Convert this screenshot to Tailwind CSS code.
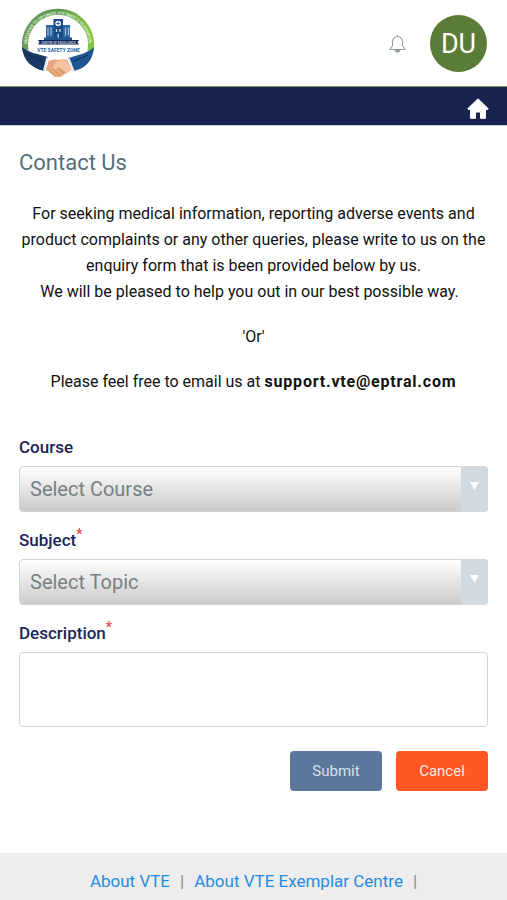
<!DOCTYPE html>
<html lang="en">
<head>
<meta charset="utf-8">
<meta name="viewport" content="width=device-width, initial-scale=1">
<title>Contact Us</title>
<script src="https://cdn.jsdelivr.net/npm/@tailwindcss/browser@4"></script>
</head>
<body class="flex min-h-screen flex-col bg-white font-['Roboto',sans-serif] text-[#111]">
<header>
  <div class="flex h-[86px] items-center justify-between px-5">
    <a href="#" aria-label="VTE Safety Zone home">
      <svg class="block h-[76px] w-[76px]" viewBox="0 0 76 76" font-family="Roboto, sans-serif">
        <defs>
          <linearGradient id="ring" x1="0" x2="1"><stop offset="0" stop-color="#6d9c5c"/><stop offset=".5" stop-color="#5a9a50"/><stop offset="1" stop-color="#84c441"/></linearGradient>
          <path id="arc" d="M7.200 44A31 31 0 1 1 68.800 44"/>
        </defs>
        <circle cx="38" cy="40" r="33" fill="#fff"/>
        <path d="M5.600 46A33 33 0 1 1 70.400 46" fill="none" stroke="url(#ring)" stroke-width="6"/>
        <text font-size="4" font-weight="700" fill="#e5f0df"><textPath href="#arc" startOffset="5">INITIATIVE TO OPTIMIZE VTE SAFETY IN HOSPITAL</textPath></text>
        <path d="M26 20h24v13H26z" fill="#2b65a3"/>
        <path d="M33.500 14h9.500v19h-9.500z" fill="#174c87"/>
        <circle cx="38.200" cy="18.500" r="2.800" fill="#fff"/>
        <path d="M38.200 16.700v3.600M36.400 18.500h3.600" stroke="#2b65a3"/>
        <path d="M28 22.500v8M31 22.500v8M45.500 22.500v8M48.500 22.500v8" stroke="#9fc0e0" stroke-width="1.200"/>
        <path d="M36.500 24v3M40 24v3M38.200 29v4" stroke="#c5dbef" stroke-width="1.300"/>
        <path d="M24 32.500h28V35H24z" fill="#23568f"/>
        <path d="M18 35h41l-1.500 2.300L59 39.500H18l1.500-2.200z" fill="#15265a"/>
        <text x="38.500" y="38.500" text-anchor="middle" font-size="3" font-weight="700" fill="#b9c9de">CENTRE OF EXCELLENCE</text>
        <text x="38.500" y="47" text-anchor="middle" font-size="5" font-weight="700" fill="#23669e">VTE SAFETY ZONE</text>
        <path d="M2 42c7 6 16 7 26 10l-4 14C12 63 3 56 2 42z" fill="#1a3766"/>
        <path d="M74 42c-6 6-15 8-26 11l5 13c12-2 20-10 21-24z" fill="#1f5590"/>
        <path d="m8 50 15 6M68 50l-14 6" fill="none" stroke="#102b52" stroke-width="1"/>
        <path d="m26.500 52 2 1-3.500 13.500-2-1zM49.500 53l-2 1 5 13 2-1z" fill="#e4f0f8"/>
        <path d="M28.500 56c4-1 6-2 9-1 4-1 7-1 10 0l4 10-5 3-6 4-6 0-5-5-3.500-2z" fill="#e6a77c"/>
        <path d="m36 57 6-2 5 1 4 9-4 3-8-6-5 3c-2-2-.5-6 2-8z" fill="#f4c39f"/>
        <path d="m30 66 4 4m-1-6 6 6m-1-7 6 5" fill="none" stroke="#c9845a" stroke-width=".8"/>
      </svg>
    </a>
    <div class="flex items-center gap-6">
      <button type="button" aria-label="Notifications">
        <svg class="block h-[19px] w-[17px]" viewBox="0 0 17 19" fill="none" stroke="#8d9ca5" stroke-width="1.100"><path d="M8.500 1v1.500M3.500 11.500V8a5 5.500 0 0 1 10 0v3.500c0 1.500 2.500 2 2.500 4H1c0-2 2.500-2.500 2.500-4z"/><path d="M6.500 16a2 2 0 0 0 4 0z" fill="#8d9ca5"/></svg>
      </button>
      <button type="button" aria-label="Account: DU" class="h-[57px] w-[57px] rounded-full bg-[#5b7c36] pt-[3px] text-[27px] leading-none text-white">DU</button>
    </div>
  </div>
  <nav class="flex h-10 items-center justify-end border-t border-t-[#7d9c60] border-b border-b-[#c9cfdc] bg-[#18244f] px-[18px]">
    <a href="#" aria-label="Home" class="pt-1"><svg class="block h-[21px] w-[22px]" viewBox="0 0 22 21" fill="#fff" stroke="#fff" stroke-linejoin="round"><path d="M11 .8 21.300 10.700l-.8.800H18.500v8.800H13.500V14H8.500v6.300H3.500v-8.800H1.500l-.8-.8z"/></svg></a>
  </nav>
</header>
<main class="px-[19px] pb-[62px]">
  <h1 class="pt-[21px] text-[22px] leading-8 text-[#546e7a]">Contact Us</h1>
  <div class="pt-[22px] text-center text-base leading-[26px]">
    <p>For seeking medical information, reporting adverse events and product complaints or any other queries, please write to us on the enquiry form that is been provided below by us.<br>We will be pleased to help you out in our best possible way.&nbsp;&nbsp;</p>
    <p class="mt-[19px]">'Or'</p>
    <p class="mt-[19px]">Please feel free to email us at <strong class="font-bold tracking-wider">support.vte@eptral.com</strong></p>
  </div>
  <form class="pt-10">
    <label for="course" class="block text-[17px] leading-6 font-medium text-[#1b2456]">Course</label>
    <div class="relative mt-[7px]">
      <select id="course" class="block h-[46px] w-full appearance-none rounded border border-[#cfd5d8] bg-linear-to-b from-white to-[#cbcbcb] pl-[10px] text-xl text-[#788181]"><option>Select Course</option></select>
      <span class="pointer-events-none absolute inset-y-0 right-0 flex w-[27px] items-center justify-center rounded-r bg-[#d3dadf] pb-[6px]"><svg class="h-2 w-[9px]" viewBox="0 0 9 8"><path d="M0 0h9L4.500 8z" fill="#fff"/></svg></span>
    </div>
    <label for="subject" class="mt-4 block text-[17px] leading-6 font-medium text-[#1b2456]">Subject<sup class="text-sm text-[#ee4b46]">*</sup></label>
    <div class="relative mt-[7px]">
      <select id="subject" class="block h-[46px] w-full appearance-none rounded border border-[#cfd5d8] bg-linear-to-b from-white to-[#cbcbcb] pl-[10px] text-xl text-[#788181]"><option>Select Topic</option></select>
      <span class="pointer-events-none absolute inset-y-0 right-0 flex w-[27px] items-center justify-center rounded-r bg-[#d3dadf] pb-[6px]"><svg class="h-2 w-[9px]" viewBox="0 0 9 8"><path d="M0 0h9L4.500 8z" fill="#fff"/></svg></span>
    </div>
    <label for="description" class="mt-4 block text-[17px] leading-6 font-medium text-[#1b2456]">Description<sup class="text-sm text-[#ee4b46]">*</sup></label>
    <textarea id="description" class="mt-[7px] block h-[75px] w-full resize-none rounded border border-[#d0d6d8] p-2"></textarea>
    <div class="mt-6 flex justify-end gap-[14px]">
      <button type="button" class="h-10 w-[92px] rounded bg-[#5b789c] text-[15px] text-[#d5e0eb]">Submit</button>
      <button type="button" class="h-10 w-[92px] rounded bg-[#ff5722] text-[15px] text-[#ffe9e0]">Cancel</button>
    </div>
  </form>
</main>
<footer class="grow bg-[#ededed] px-[19px] pt-4 text-center text-[17px] leading-6 text-[#8a8a8a]">
  <a href="#" class="text-[#258ce3]">About VTE</a><span class="px-[10px]">|</span><a href="#" class="text-[#258ce3]">About VTE Exemplar Centre</a><span class="pl-[10px]">|</span>
</footer>
</body>
</html>
